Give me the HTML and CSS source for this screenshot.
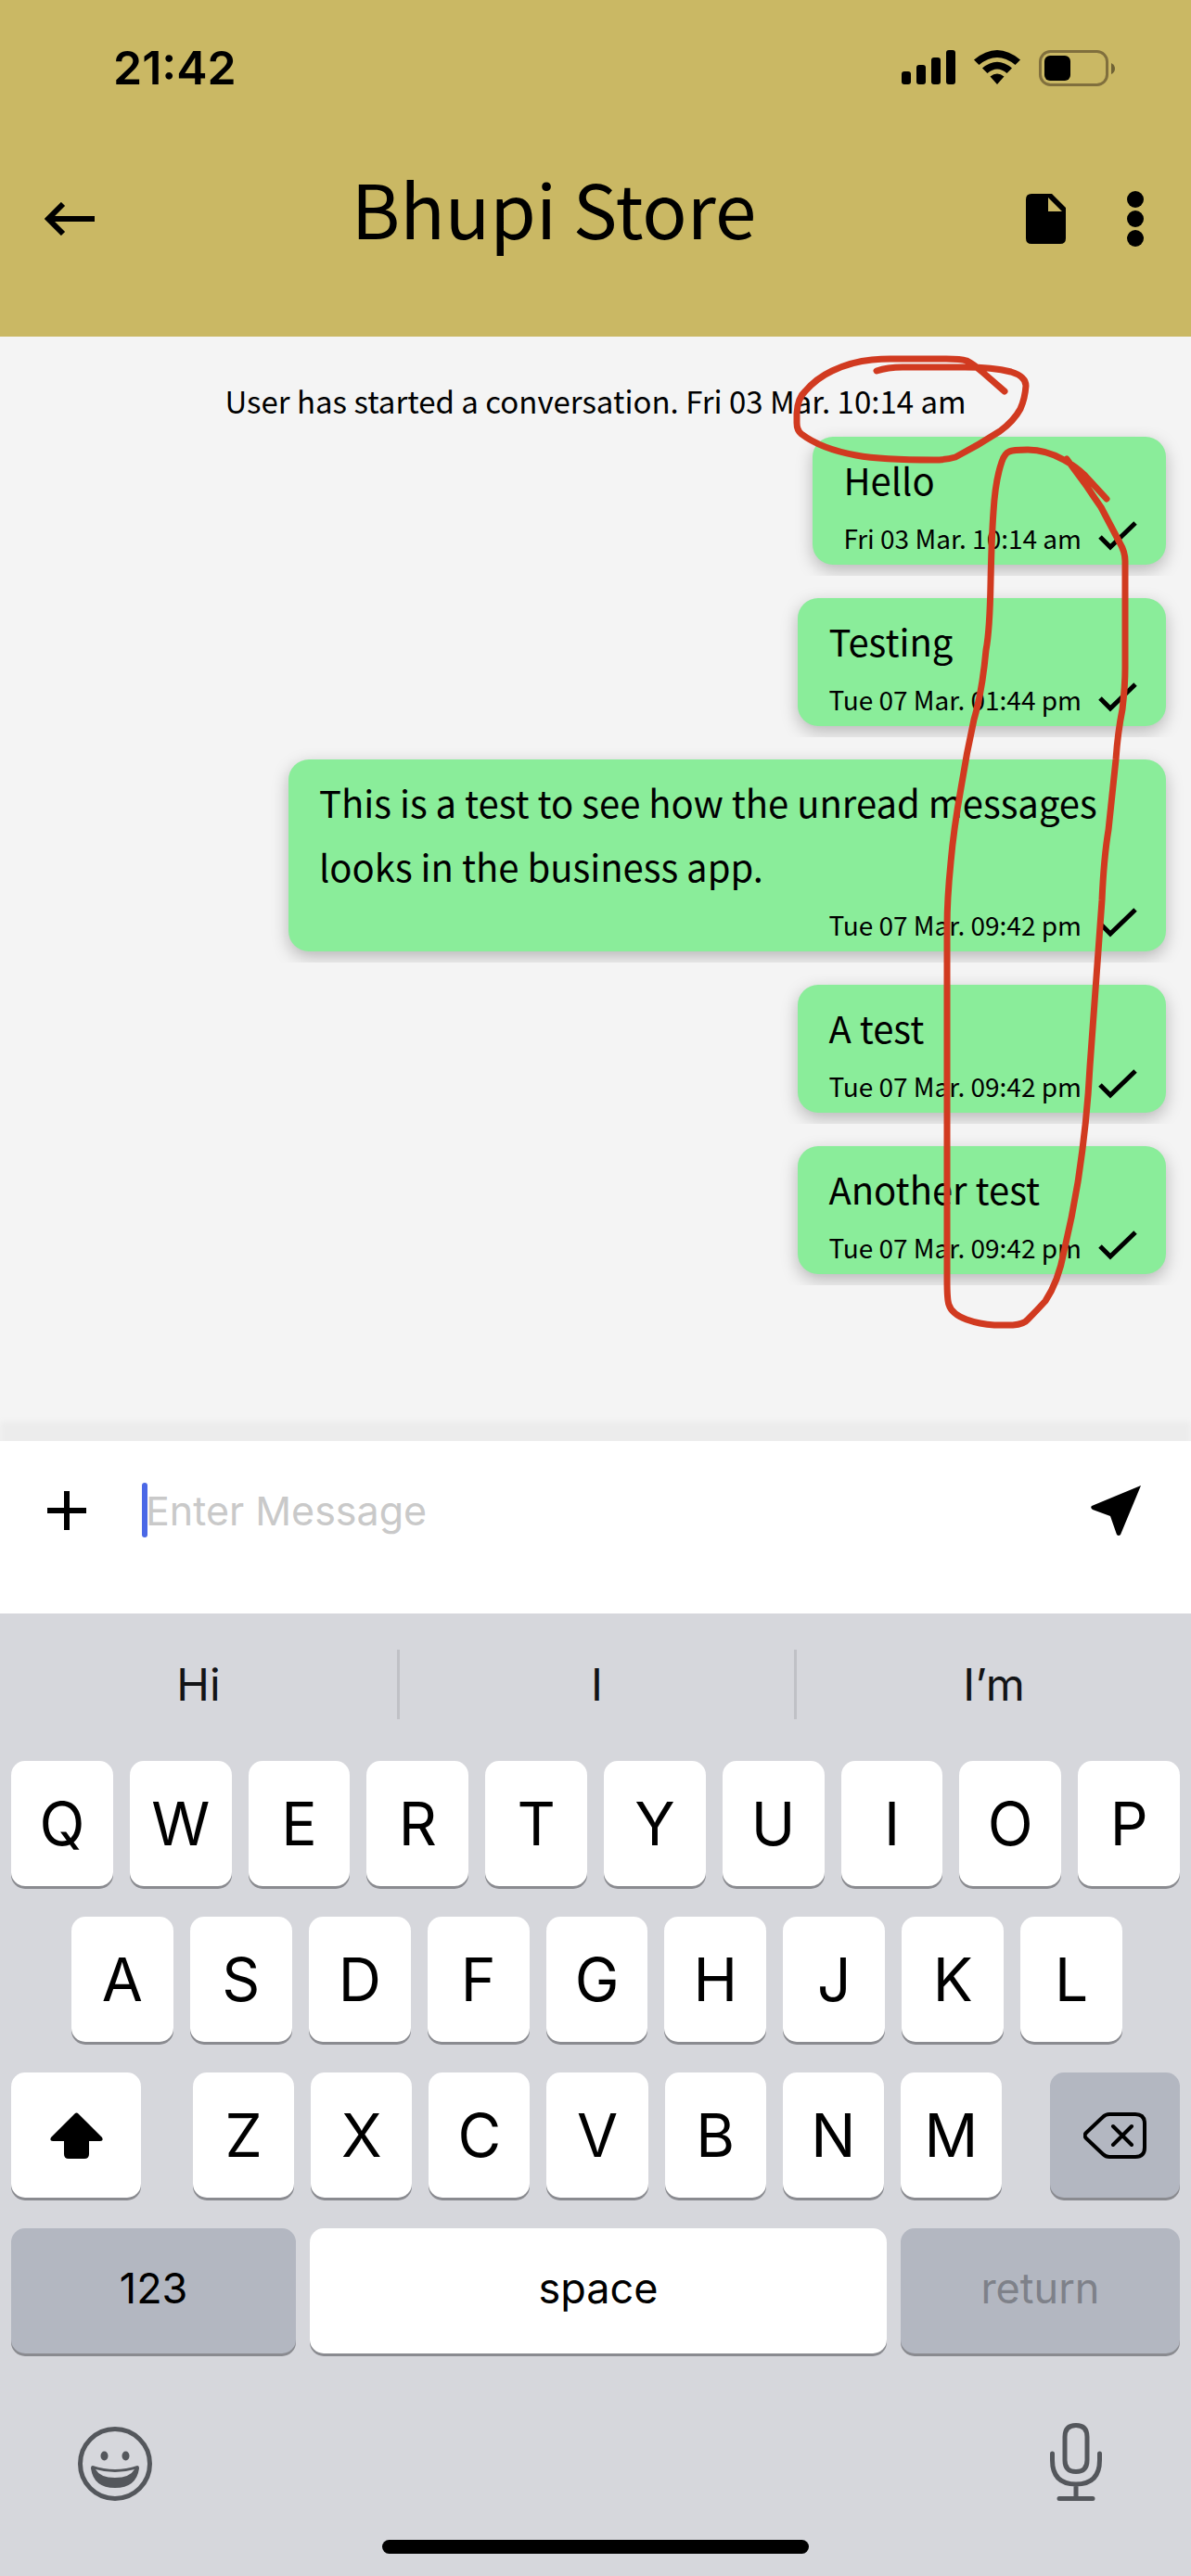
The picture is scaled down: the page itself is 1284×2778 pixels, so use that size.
FILE: index.html
```html
<!DOCTYPE html>
<html lang="en">
<head>
<meta charset="utf-8">
<meta name="viewport" content="width=device-width, initial-scale=1">
<title>Bhupi Store</title>
<link rel="stylesheet" href="styles.css">
</head>
<body>
<header class="header">
  <div class="status">
    <time class="clock">21:42</time>
    <div class="indicators">
      <svg class="signal" viewBox="0 0 58 38" aria-hidden="true"><rect x="0" y="23" width="10" height="14" rx="3"/><rect x="16" y="16" width="10" height="21" rx="3"/><rect x="32" y="8" width="10" height="29" rx="3"/><rect x="48" y="0" width="10" height="37" rx="3"/></svg>
      <svg class="wifi" viewBox="0 0 52 38" aria-hidden="true"><path d="M1 10.500Q26-10.500 51 10.500L45.500 16Q26 0 6.500 16ZM10 19.500Q26 6 42 19.500L36.500 25Q26 16 15.500 25ZM18.500 28.500Q26 22.500 33.500 28.500L26 37Z"/></svg>
      <svg class="battery" viewBox="0 0 83 39" aria-hidden="true"><rect x="1.500" y="1.500" width="72" height="36" rx="11" fill="none" stroke="#806f3d" stroke-width="3"/><rect x="6" y="6" width="28" height="27" rx="6"/><path d="M78 14q4 2 4 6t-4 6z" fill="#6f6235"/></svg>
    </div>
  </div>
  <div class="titlebar">
    <button class="icon-btn" aria-label="Back"><svg class="back" viewBox="0 0 54 36"><path d="M54 18H5M20 2L4 18L20 34" fill="none" stroke="#000" stroke-width="6"/></svg></button>
    <h1 class="title">Bhupi Store</h1>
    <div class="actions">
      <button class="icon-btn" aria-label="Document"><svg class="doc" viewBox="0 0 44 54"><path fill-rule="evenodd" d="M6 0H28L43 15V48Q43 54 37 54H6Q0 54 0 48V6Q0 0 6 0ZM24 4V19H39Z"/></svg></button>
      <button class="icon-btn" aria-label="More"><svg class="more" viewBox="0 0 18 60"><circle cx="9" cy="9" r="9"/><circle cx="9" cy="30" r="9"/><circle cx="9" cy="51" r="9"/></svg></button>
    </div>
  </div>
</header>

<main class="chat">
  <p class="notice">User has started a conversation. Fri 03 Mar. 10:14 am</p>
  <ul class="messages">
    <li class="row"><article class="bubble"><p class="text">Hello</p><footer class="meta"><time>Fri 03 Mar. 10:14 am</time><svg class="check" viewBox="0 0 42 32"><path d="M2 17L13 28L40 2"/></svg></footer></article></li>
    <li class="row"><article class="bubble"><p class="text">Testing</p><footer class="meta"><time>Tue 07 Mar. 01:44 pm</time><svg class="check" viewBox="0 0 42 32"><path d="M2 17L13 28L40 2"/></svg></footer></article></li>
    <li class="row"><article class="bubble"><p class="text">This is a test to see how the unread messages looks in the business app.</p><footer class="meta"><time>Tue 07 Mar. 09:42 pm</time><svg class="check" viewBox="0 0 42 32"><path d="M2 17L13 28L40 2"/></svg></footer></article></li>
    <li class="row"><article class="bubble"><p class="text">A test</p><footer class="meta"><time>Tue 07 Mar. 09:42 pm</time><svg class="check" viewBox="0 0 42 32"><path d="M2 17L13 28L40 2"/></svg></footer></article></li>
    <li class="row"><article class="bubble"><p class="text">Another test</p><footer class="meta"><time>Tue 07 Mar. 09:42 pm</time><svg class="check" viewBox="0 0 42 32"><path d="M2 17L13 28L40 2"/></svg></footer></article></li>
  </ul>
  <svg class="marker" viewBox="844 363 440 1100" aria-hidden="true">
    <path d="M945 400Q957 396 973 396L1040 396Q1070 396 1090 401Q1106 406 1106 416Q1105 430 1100 441Q1093 454 1078 465Q1055 480 1030 493Q1020 496 1007 496Q950 496 923 491Q885 484 864 468Q859 464 859 456L859 446Q860 429 868 422Q880 408 897 400Q918 390 940 388Q950 387 960 387L1020 387Q1036 387 1042 389Q1050 393 1060 402L1083 422"/>
    <path d="M1193 538L1170 513Q1160 503 1147 496Q1128 485 1108 485Q1092 485 1088 487Q1083 489 1080 498Q1073 518 1071 552Q1069 580 1068 628Q1067 680 1063 701Q1059 745 1050 776Q1042 812 1036 850Q1028 895 1025 930Q1021 970 1021 1000L1021 1380Q1021 1402 1023 1407Q1026 1417 1042 1423Q1056 1428 1072 1429L1092 1429Q1104 1428 1108 1423Q1118 1413 1127 1403Q1141 1382 1147 1350Q1156 1312 1162 1275Q1172 1210 1175 1150L1188 971Q1190 925 1195 895L1203 819Q1205 790 1210 765Q1213 740 1213 720L1213 605Q1213 595 1207 585L1187 547Q1180 537 1172 525L1150 495"/>
  </svg>
</main>

<form class="composer">
  <button class="icon-btn" type="button" aria-label="Add"><svg class="plus" viewBox="0 0 42 42"><path d="M21 0V42M0 21H42" stroke="#000" stroke-width="6"/></svg></button>
  <div class="field"><input class="input" type="text" placeholder="Enter Message" aria-label="Message"></div>
  <button class="icon-btn" type="button" aria-label="Send"><svg class="send" viewBox="0 0 54 54"><path d="M54 0L32 53Q30 55 28 53L21 33L2 26Q-1 24 1 22Z"/></svg></button>
</form>

<section class="keyboard" aria-label="Keyboard">
  <div class="suggestions"><button class="suggestion">Hi</button><button class="suggestion">I</button><button class="suggestion">I’m</button></div>
  <div class="keys">
    <div class="keyrow"><button class="key">Q</button><button class="key">W</button><button class="key">E</button><button class="key">R</button><button class="key">T</button><button class="key">Y</button><button class="key">U</button><button class="key">I</button><button class="key">O</button><button class="key">P</button></div>
    <div class="keyrow keyrow-mid"><button class="key">A</button><button class="key">S</button><button class="key">D</button><button class="key">F</button><button class="key">G</button><button class="key">H</button><button class="key">J</button><button class="key">K</button><button class="key">L</button></div>
    <div class="keyrow keyrow-low">
      <button class="key" aria-label="Shift"><svg class="shift" viewBox="0 0 57 50"><path d="M26.500 1.500Q28.500-.5 30.500 1.500L56 27Q58 31 54 31H42V45Q42 50 37 50H20Q15 50 15 45V31H3Q-1 31 1 27Z"/></svg></button>
      <div class="letters"><button class="key">Z</button><button class="key">X</button><button class="key">C</button><button class="key">V</button><button class="key">B</button><button class="key">N</button><button class="key">M</button></div>
      <button class="key key-dark" aria-label="Delete"><svg class="delete" viewBox="0 0 68 50"><path d="M28 2H56Q66 2 66 12V38Q66 48 56 48H28Q24 48 21 45L3 28Q0 25 3 22L21 5Q24 2 28 2ZM32 15L52 35M52 15L32 35"/></svg></button>
    </div>
    <div class="keyrow keyrow-bottom"><button class="key key-word key-dark">123</button><button class="key key-word">space</button><button class="key key-word key-dark" disabled>return</button></div>
  </div>
  <div class="dock">
    <button class="icon-btn" aria-label="Emoji"><svg class="emoji" viewBox="0 0 80 80"><circle cx="40" cy="40" r="37.500" fill="none" stroke="#54575c" stroke-width="5"/><ellipse cx="28.500" cy="31.500" rx="4" ry="5"/><ellipse cx="51.500" cy="31.500" rx="4" ry="5"/><path fill-rule="evenodd" d="M16 42Q40 50 64 42Q66 42 66 45Q63 66 40 66Q17 66 14 45Q14 42 16 42ZM19 46Q24 55 40 55Q56 55 61 46Q40 52 19 46Z"/></svg></button>
    <button class="icon-btn" aria-label="Dictate"><svg class="mic" viewBox="0 0 56 84"><path d="M28 2.500Q40 2.500 40 15V40Q40 52.500 28 52.500Q16 52.500 16 40V15Q16 2.500 28 2.500ZM2.500 33V40Q2.500 66 28 66Q53.500 66 53.500 40V33M28 66V81M10 81.500H46"/></svg></button>
  </div>
  <div class="home"></div>
</section>
</body>
</html>
```
FILE: styles.css
```css
* { box-sizing: border-box; }

body {
  margin: 0;
  min-height: 100vh;
  display: flex;
  flex-direction: column;
  background: #f4f4f4;
  color: #000;
  font-family: Inter, "Liberation Sans", sans-serif;
}

button {
  border: 0;
  padding: 0;
  background: none;
  color: inherit;
  font: inherit;
}

svg { display: block; }

.icon-btn { display: flex; align-items: center; }

/* Header */
.header { background: #cab864; padding-bottom: 66px; }

.status {
  display: flex;
  justify-content: space-between;
  align-items: center;
  padding: 42px 81px 0 122px;
}

.clock { font-size: 50px; line-height: 62px; font-weight: 600; }
.indicators { display: flex; align-items: center; gap: 19px; }
.signal { width: 58px; height: 38px; }
.wifi { width: 52px; height: 38px; }
.battery { width: 83px; height: 39px; }

.titlebar {
  display: grid;
  grid-template-columns: 132px 1fr 219px;
  align-items: center;
  padding: 59px 51px 0 48px;
}

.titlebar .icon-btn { margin-top: 12px; }

.title {
  margin: 0 0 14px;
  font-family: "Noto Sans CJK SC", sans-serif;
  font-size: 80px;
  line-height: 120px;
  font-weight: 400;
  text-align: center;
}

.actions { display: flex; justify-content: flex-end; align-items: center; gap: 65px; }
.back { width: 54px; height: 36px; }
.doc { width: 44px; height: 54px; }
.more { width: 18px; height: 60px; }

/* Conversation */
.chat {
  position: relative;
  flex: 1;
  font-family: "Noto Sans CJK SC", sans-serif;
}

.notice {
  margin: 0;
  padding: 45px 0 3px;
  font-size: 33px;
  line-height: 48px;
  text-align: center;
}

.messages { margin: 0; padding: 0; list-style: none; }

/* The row cuts its bubble's shadow off below */
.row {
  display: flex;
  justify-content: flex-end;
  padding: 12px 27px 12px 48px;
  margin-bottom: 12px;
  overflow: hidden;
}

.bubble {
  max-width: 946px;
  padding: 12px 31px 0 33px;
  border-radius: 22px;
  background: #8aed9a;
  box-shadow: 0 6px 18px rgba(0, 0, 0, 0.25);
}

.text { margin: 0; font-size: 40px; line-height: 69px; }

.meta {
  display: flex;
  justify-content: flex-end;
  gap: 18px;
  height: 57px;
  padding-top: 10px;
  font-size: 28px;
  line-height: 36px;
}

.check {
  width: 42px;
  height: 32px;
  fill: none;
  stroke: #000;
  stroke-width: 5;
}

.marker {
  position: absolute;
  top: 0;
  right: 0;
  width: 440px;
  height: 1100px;
  fill: none;
  stroke: #d13a20;
  stroke-width: 7;
  stroke-linecap: round;
  stroke-linejoin: round;
  pointer-events: none;
}

/* Composer */
.composer {
  display: flex;
  align-items: flex-start;
  padding: 36px 54px 72px 51px;
  background: #fff;
  box-shadow: 0 -21px 6px #ececec;
}

.composer .icon-btn { height: 78px; }
.plus { width: 42px; height: 42px; }
.send { width: 54px; height: 54px; }
.field { position: relative; flex: 1; margin: 0 60px; }

.field::before {
  content: "";
  position: absolute;
  left: 0;
  top: 9px;
  width: 6px;
  height: 59px;
  border-radius: 3px;
  background: #4b68e6;
}

.input {
  display: block;
  width: 100%;
  height: 78px;
  padding: 0 0 0 4px;
  border: 0;
  outline: 0;
  background: none;
  font: 43px Inter, sans-serif;
}

.input::placeholder { color: #c9c9c9; opacity: 1; }

/* Keyboard */
.keyboard { padding-bottom: 24px; background: #d6d7dc; }

.suggestions {
  display: grid;
  grid-template-columns: repeat(3, 1fr);
  padding: 39px 0 45px;
}

.suggestion {
  height: 75px;
  font-size: 48px;
  line-height: 75px;
  color: #131416;
}

.suggestion + .suggestion { border-left: 3px solid #c0c1c6; }

.keys { display: grid; gap: 33px; padding: 0 12px; }
.keyrow, .letters { display: flex; gap: 18px; }
.keyrow-mid { padding: 0 62px 0 65px; }
.keyrow-low { display: grid; grid-template-columns: 140px 1fr 140px; gap: 0; }
.letters { margin: 0 52px 0 56px; }
.keyrow-bottom { display: grid; grid-template-columns: 307fr 621fr 301fr; gap: 15px; }

.key {
  flex: 1;
  display: flex;
  align-items: center;
  justify-content: center;
  height: 135px;
  border-radius: 15px;
  background: #fff;
  box-shadow: 0 3px 0 #8a8b90;
  font-size: 64px;
}

.key-word { padding-bottom: 6px; font-size: 45px; }
.key-dark { background: #b3b7c1; }
.key:disabled { color: #7e8189; }

.shift { width: 57px; height: 50px; }

.delete {
  width: 68px;
  height: 50px;
  fill: none;
  stroke: #000;
  stroke-width: 4;
  stroke-linecap: round;
}

.dock {
  display: flex;
  justify-content: space-between;
  align-items: flex-end;
  padding: 75px 96px 0 84px;
}

.emoji { width: 80px; height: 80px; fill: #54575c; }

.mic {
  width: 56px;
  height: 84px;
  fill: none;
  stroke: #54575c;
  stroke-width: 5;
  stroke-linecap: round;
}

.home {
  width: 460px;
  height: 15px;
  margin: 42px auto 0;
  border-radius: 8px;
  background: #000;
}
```
